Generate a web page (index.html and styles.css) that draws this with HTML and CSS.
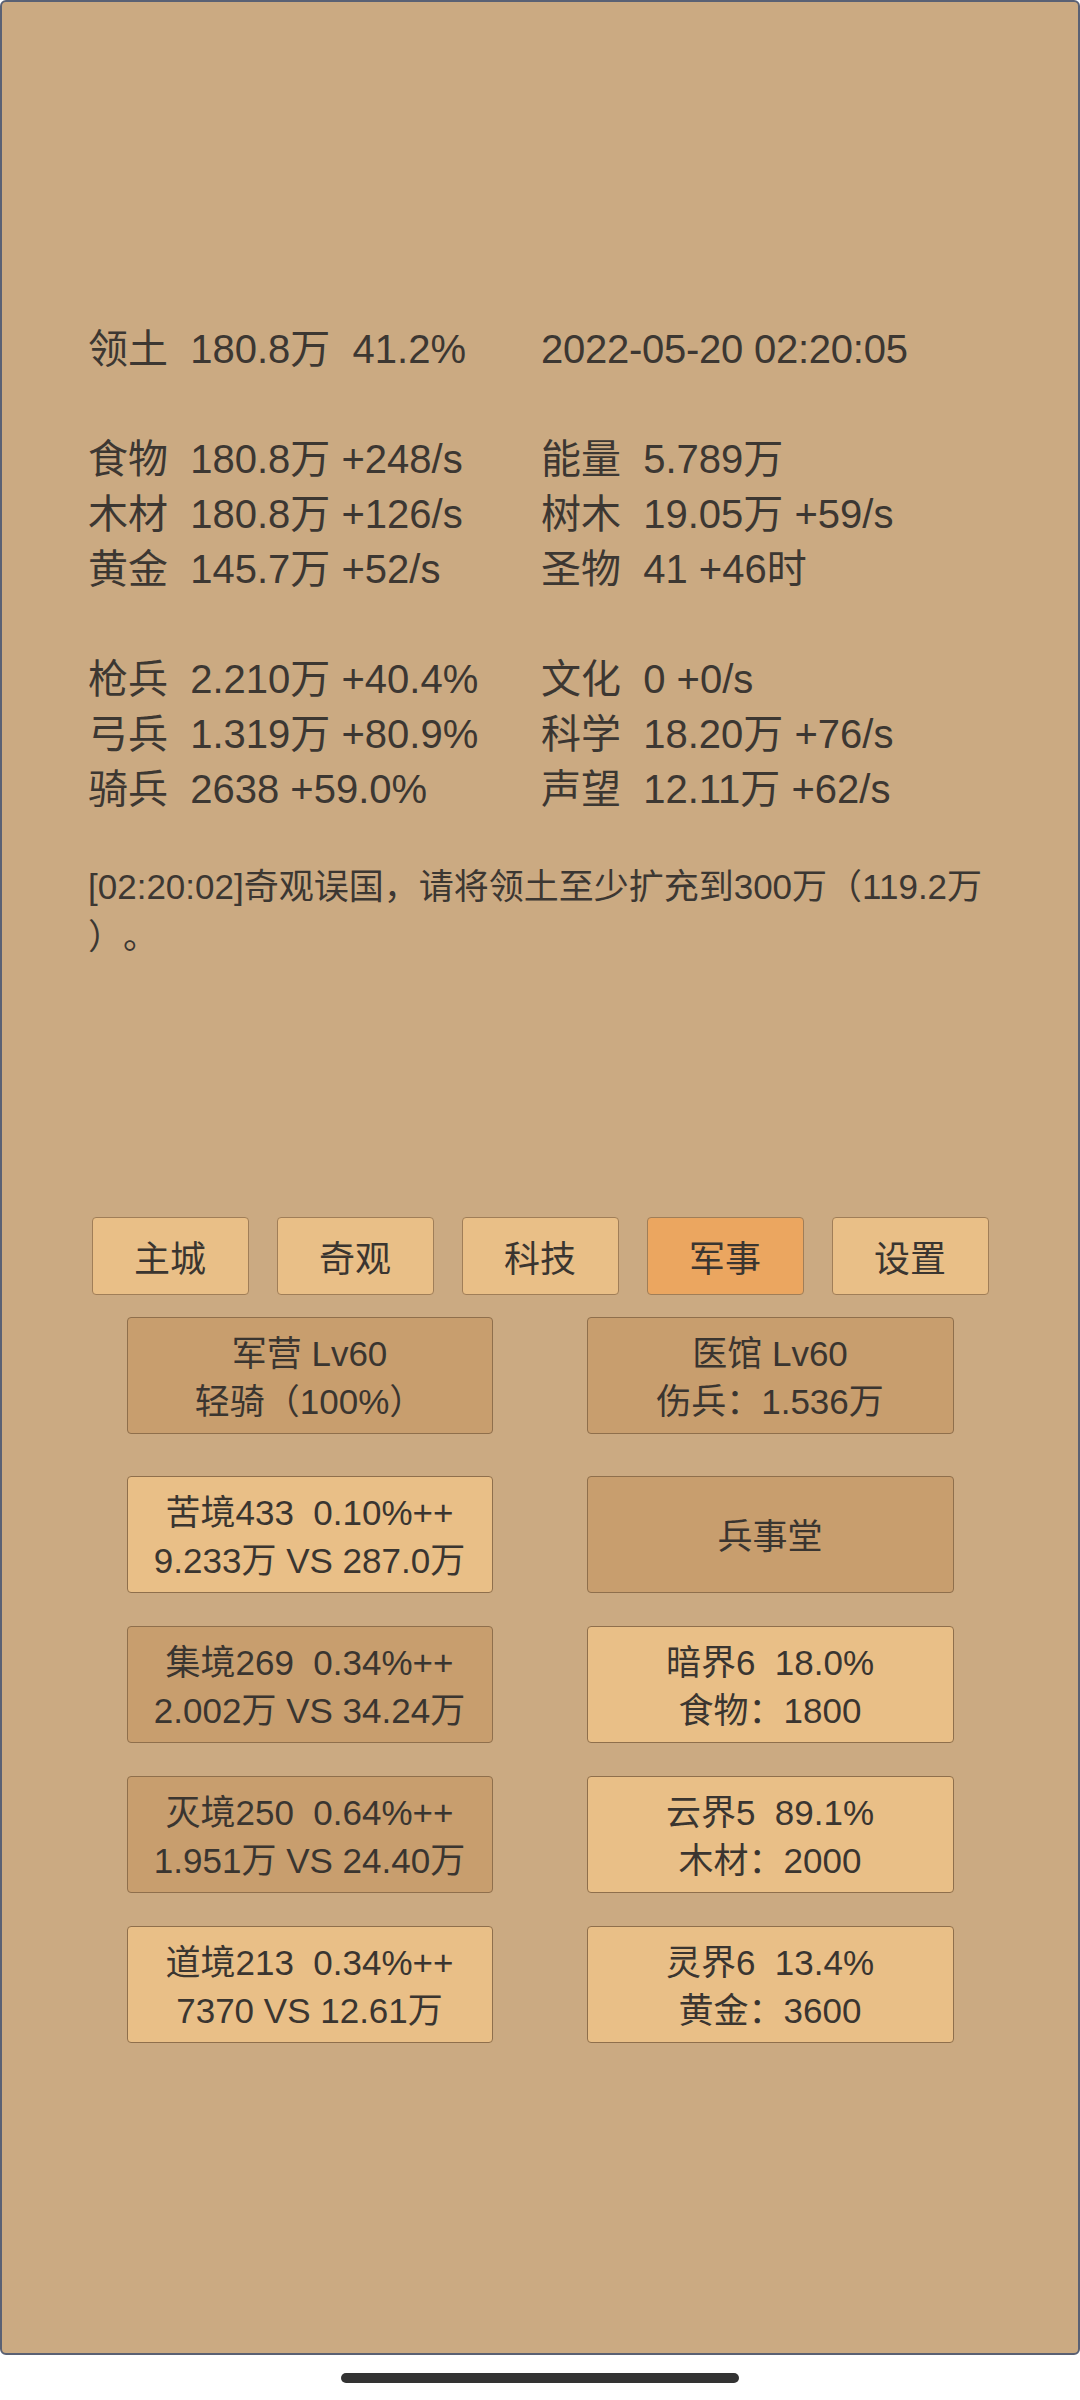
FILE: index.html
```html
<!DOCTYPE html>
<html lang="zh-CN">
<head>
<meta charset="utf-8">
<title>领土</title>
<link rel="stylesheet" href="styles.css">
</head>
<body>
<div class="screen">
  <div class="stats">
    <div class="group">
      <div class="cell"><span class="lbl">领土</span>  180.8万  41.2%</div>
      <div class="cell date">2022-05-20 02:20:05</div>
    </div>
    <div class="group">
      <div class="cell"><span class="lbl">食物</span>  180.8万 +248/s</div>
      <div class="cell"><span class="lbl">能量</span>  5.789万</div>
      <div class="cell"><span class="lbl">木材</span>  180.8万 +126/s</div>
      <div class="cell"><span class="lbl">树木</span>  19.05万 +59/s</div>
      <div class="cell"><span class="lbl">黄金</span>  145.7万 +52/s</div>
      <div class="cell"><span class="lbl">圣物</span>  41 +46时</div>
    </div>
    <div class="group">
      <div class="cell"><span class="lbl">枪兵</span>  2.210万 +40.4%</div>
      <div class="cell"><span class="lbl">文化</span>  0 +0/s</div>
      <div class="cell"><span class="lbl">弓兵</span>  1.319万 +80.9%</div>
      <div class="cell"><span class="lbl">科学</span>  18.20万 +76/s</div>
      <div class="cell"><span class="lbl">骑兵</span>  2638 +59.0%</div>
      <div class="cell"><span class="lbl">声望</span>  12.11万 +62/s</div>
    </div>
    <p class="msg"><span class="nowrap">[02:20:02]奇观误国，请将领土至少扩充到300万（119.2万</span><br>）。</p>
  </div>

  <nav class="tabs">
    <div class="tab">主城</div>
    <div class="tab">奇观</div>
    <div class="tab">科技</div>
    <div class="tab active">军事</div>
    <div class="tab">设置</div>
  </nav>

  <div class="cards">
    <div class="card dark"><div>军营 Lv60</div><div>轻骑（100%）</div></div>
    <div class="card dark"><div>医馆 Lv60</div><div>伤兵：1.536万</div></div>
    <div class="card light"><div>苦境433  0.10%++</div><div>9.233万 VS 287.0万</div></div>
    <div class="card dark"><div>兵事堂</div></div>
    <div class="card dark"><div>集境269  0.34%++</div><div>2.002万 VS 34.24万</div></div>
    <div class="card light"><div>暗界6  18.0%</div><div>食物：1800</div></div>
    <div class="card dark"><div>灭境250  0.64%++</div><div>1.951万 VS 24.40万</div></div>
    <div class="card light"><div>云界5  89.1%</div><div>木材：2000</div></div>
    <div class="card light"><div>道境213  0.34%++</div><div>7370 VS 12.61万</div></div>
    <div class="card light"><div>灵界6  13.4%</div><div>黄金：3600</div></div>
  </div>
</div>
<div class="homebar-area"><div class="homebar"></div></div>
</body>
</html>
```

FILE: styles.css
```css
html, body {
  margin: 0;
  padding: 0;
  background: #ffffff;
}

body {
  width: 1080px;
  height: 2400px;
  overflow: hidden;
  font-family: "Liberation Sans", "Noto Sans CJK SC", sans-serif;
  color: #3c3732;
  text-spacing-trim: space-all;
}

.screen {
  box-sizing: border-box;
  height: 2355px;
  background: #cbaa82;
  border: 2px solid #5a6174;
  border-radius: 6px;
  padding-top: 320px;
}

.stats {
  padding: 0 88px 0 86px;
  font-size: 40px;
}

.group {
  display: grid;
  grid-template-columns: 453px 451px;
  grid-auto-rows: 55px;
  line-height: 55px;
  margin-bottom: 55px;
}

.group:nth-of-type(3) {
  margin-bottom: 0;
}

.cell {
  white-space: pre;
}

.date {
  letter-spacing: -0.25px;
}

.msg {
  margin: 45px 0 0 0;
  font-size: 35px;
  line-height: 50px;
  text-spacing-trim: space-all;
}

.nowrap {
  white-space: nowrap;
}

.tabs {
  display: flex;
  justify-content: center;
  gap: 28px;
  margin-top: 255px;
}

.tab {
  box-sizing: border-box;
  width: 157px;
  height: 78px;
  background: #e9bf87;
  border: 1.5px solid #a07e58;
  border-radius: 4px;
  display: flex;
  align-items: center;
  justify-content: center;
  font-size: 36px;
  color: #3a3530;
}

.tab.active {
  background: #eba660;
}

.cards {
  display: grid;
  grid-template-columns: 366px 367px;
  column-gap: 94px;
  row-gap: 33px;
  justify-content: center;
  margin-top: 22px;
}

.cards .card:nth-child(-n+2) {
  margin-bottom: 9px;
}

.card {
  box-sizing: border-box;
  height: 117px;
  padding-top: 4px;
  border: 1.5px solid #8f6f4c;
  border-radius: 4px;
  display: flex;
  flex-direction: column;
  align-items: center;
  justify-content: center;
  font-size: 35px;
  line-height: 48px;
  white-space: pre;
  color: #3a3530;
}

.card.dark {
  background: #c89e6e;
}

.card.light {
  background: #e9bf87;
}

.homebar-area {
  height: 45px;
  display: flex;
  justify-content: center;
  padding-top: 18px;
  box-sizing: border-box;
}

.homebar {
  width: 398px;
  height: 10px;
  border-radius: 5px;
  background: #333333;
}
```
